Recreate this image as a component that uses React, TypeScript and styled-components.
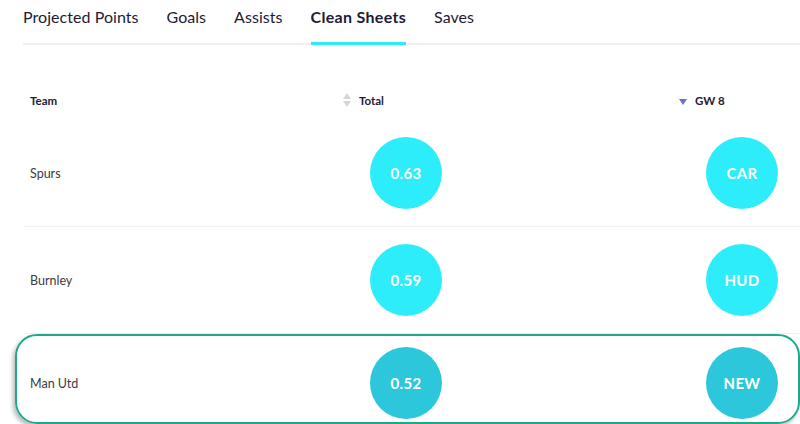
import React, { FC } from "react";
import styled, { createGlobalStyle } from "styled-components";

const GlobalStyle = createGlobalStyle`
  html, body {
    margin: 0;
    padding: 0;
    background: #ffffff;
    overflow: hidden;
  }
  body {
    font-family: Lato, "Noto Sans", sans-serif;
    color: #1d1b36;
  }
`;

const Page = styled.div`
  width: 800px;
  height: 424px;
  overflow: hidden;
  padding-left: 23px;
  box-sizing: border-box;
`;

const Tabs = styled.nav`
  display: flex;
  gap: 28px;
  height: 45px;
  border-bottom: 2px solid #f0f0f2;
  box-sizing: border-box;
`;

const Tab = styled.div<{ active?: boolean }>`
  font-size: 16px;
  letter-spacing: ${p => (p.active ? "0.3px" : "0.05px")};
  line-height: 34px;
  font-weight: ${p => (p.active ? 700 : 400)};
  color: #1d1b36;
  border-bottom: 3px solid ${p => (p.active ? "#2ee9f7" : "transparent")};
  margin-bottom: -2px;
  white-space: nowrap;
`;

const Grid = styled.div`
  display: grid;
  grid-template-columns: 314px 336px 1fr;
`;

const HeaderRow = styled(Grid)`
  height: 75px;
  align-items: end;
  padding-bottom: 12px;
  box-sizing: border-box;
`;

const HeaderCell = styled.div<{ inset?: number }>`
  display: flex;
  align-items: center;
  gap: 7px;
  padding-left: ${p => p.inset ?? 0}px;
  font-size: 11.5px;
  font-weight: 700;
  color: #1d1b36;
  height: 16px;
`;

const Row = styled(Grid)`
  height: 106px;
  align-items: center;
  border-bottom: 1px solid #f0f0f0;
`;

const HighlightRow = styled(Grid)`
  height: 90px;
  align-items: center;
  margin-left: -8px;
  padding-left: 6px;
  padding-top: 8px;
  border: 2px solid #1ea98b;
  border-radius: 22px;
  box-shadow: -2px 3px 4px rgba(0, 0, 0, 0.28);
  box-sizing: border-box;
`;

const TeamName = styled.div`
  padding-left: 7px;
  font-size: 12.5px;
  color: #3b3b44;
`;

const Circle = styled.div<{ dark?: boolean }>`
  width: 72px;
  height: 72px;
  margin-left: 33px;
  border-radius: 50%;
  background: ${p => (p.dark ? "#2cc7da" : "#2eedfb")};
  color: #ffffff;
  display: flex;
  align-items: center;
  justify-content: center;
  font-size: 15px;
  font-weight: 700;
  letter-spacing: 0.3px;
`;

const SortBoth: FC = () => (
  <svg width="10" height="14" viewBox="0 0 10 14">
    <path d="M5 0 L9 6 L1 6 Z" fill="#d6d6d8" />
    <path d="M5 14 L9 8 L1 8 Z" fill="#d6d6d8" />
  </svg>
);

const SortDown: FC = () => (
  <svg width="10" height="14" viewBox="0 0 10 14">
    <path d="M1 6 L9 6 L5 12 Z" fill="#6b6fd8" />
  </svg>
);

type TeamRow = { team: string; total: string; fixture: string };

const rows: TeamRow[] = [
  { team: "Spurs", total: "0.63", fixture: "CAR" },
  { team: "Burnley", total: "0.59", fixture: "HUD" },
  { team: "Man Utd", total: "0.52", fixture: "NEW" }
];

const App: FC = () => {
  const tabs = ["Projected Points", "Goals", "Assists", "Clean Sheets", "Saves"];
  return (
    <>
      <GlobalStyle />
      <Page>
        <Tabs>
          {tabs.map(t => (
            <Tab key={t} active={t === "Clean Sheets"}>
              {t}
            </Tab>
          ))}
        </Tabs>
        <HeaderRow>
          <HeaderCell inset={7}>Team</HeaderCell>
          <HeaderCell inset={5}>
            <SortBoth />
            Total
          </HeaderCell>
          <HeaderCell inset={5}>
            <SortDown />
            GW 8
          </HeaderCell>
        </HeaderRow>
        {rows.map((r, i) => {
          const last = i === rows.length - 1;
          const cells = (
            <>
              <TeamName>{r.team}</TeamName>
              <div>
                <Circle dark={last}>{r.total}</Circle>
              </div>
              <div>
                <Circle dark={last}>{r.fixture}</Circle>
              </div>
            </>
          );
          return last ? <HighlightRow key={r.team}>{cells}</HighlightRow> : <Row key={r.team}>{cells}</Row>;
        })}
      </Page>
    </>
  );
};

export default App;
